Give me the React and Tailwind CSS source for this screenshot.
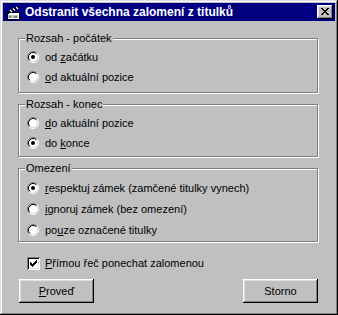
const font = "font-['Liberation_Sans',Arial,sans-serif]";

function Radio({ checked }) {
  return (
    <svg width="12" height="12" viewBox="0 0 12 12" className="shrink-0">
      <circle cx="6" cy="6" r="4.5" fill="#fff" />
      <path d="M2.11 9.89 A5.5 5.5 0 0 1 9.89 2.11" stroke="#808080" fill="none" />
      <path d="M9.89 2.11 A5.5 5.5 0 0 1 2.11 9.89" stroke="#fff" fill="none" />
      <path d="M2.82 9.18 A4.5 4.5 0 0 1 9.18 2.82" stroke="#000" fill="none" />
      <path d="M9.18 2.82 A4.5 4.5 0 0 1 2.82 9.18" stroke="#dfdfdf" fill="none" />
      {checked && <circle cx="6" cy="6" r="2" fill="#000" />}
    </svg>
  );
}

function Check() {
  const rows = ["......X", ".....XX", "X...XXX", "XX.XXX.", "XXXXX..", ".XXX...", "..X...."];
  return (
    <div className="w-[13px] h-[13px] shrink-0 bg-white shadow-[inset_1px_1px_#808080,inset_-1px_-1px_#fff,inset_2px_2px_#000,inset_-2px_-2px_#dfdfdf] flex items-center justify-center">
      <svg width="7" height="7" viewBox="0 0 7 7" shapeRendering="crispEdges">
        {rows.map((r, y) =>
          r.split("").map((c, x) => (c === "X" ? <rect key={x + "-" + y} x={x} y={y} width="1" height="1" fill="#000" /> : null))
        )}
      </svg>
    </div>
  );
}

function CloseGlyph() {
  const rows = ["XX....XX", ".XX..XX.", "..XXXX..", "...XX...", "..XXXX..", ".XX..XX.", "XX....XX"];
  return (
    <svg width="8" height="7" viewBox="0 0 8 7" shapeRendering="crispEdges">
      {rows.map((r, y) =>
        r.split("").map((c, x) => (c === "X" ? <rect key={x + "-" + y} x={x} y={y} width="1" height="1" fill="#000" /> : null))
      )}
    </svg>
  );
}

function ClapIcon() {
  return (
    <svg width="16" height="16" viewBox="0 0 16 16" shapeRendering="crispEdges">
      <rect x="2" y="8" width="12" height="7" fill="#fff" stroke="#000" strokeWidth="1" />
      <rect x="3" y="11" width="10" height="3" fill="#c0c0c0" />
      <path d="M2 8 L13 2 L14 4 L3 10 Z" fill="#000" />
      <path d="M5 6 L7 8 M8 4.5 L10 6.5 M11 3 L13 5" stroke="#fff" strokeWidth="1.2" shapeRendering="auto" />
      <rect x="4" y="12" width="2" height="2" fill="#808080" />
      <rect x="9" y="12" width="3" height="2" fill="#808080" />
    </svg>
  );
}

function Group({ label, className, children }) {
  return (
    <div className={"relative border border-[#808080] shadow-[1px_1px_0_#fff,inset_1px_1px_0_#fff] pl-[8px] " + className}>
      <span className="absolute left-[6px] top-[-8px] bg-[#c0c0c0] pl-[1px] pr-[1px] leading-[14px]">{label}</span>
      {children}
    </div>
  );
}

function Option({ checked, tall, children }) {
  return (
    <div className={(tall ? "h-[21px]" : "h-5") + " flex items-center gap-[6px]"}>
      <Radio checked={checked} />
      <span className="leading-[14px]">{children}</span>
    </div>
  );
}

function Button({ children }) {
  return (
    <button className="w-[75px] h-[24px] bg-[#c0c0c0] shadow-[inset_-1px_-1px_#000,inset_1px_1px_#fff,inset_-2px_-2px_#808080,inset_2px_2px_#dfdfdf] flex items-center justify-center leading-[14px]">
      {children}
    </button>
  );
}

export default function App() {
  return (
    <div className={"w-[338px] h-[315px] bg-[#c0c0c0] p-[3px] text-[11px] text-black shadow-[inset_-1px_-1px_#000,inset_1px_1px_#dfdfdf,inset_-2px_-2px_#808080,inset_2px_2px_#fff] flex flex-col " + font}>
      <div className="h-[18px] bg-[#000080] flex items-center pl-[2px] pr-[2px]">
        <ClapIcon />
        <span className="ml-[4px] text-white font-bold text-[12px] leading-[16px] flex-1">Odstranit všechna zalomení z titulků</span>
        <div className="w-[16px] h-[14px] bg-[#c0c0c0] shadow-[inset_-1px_-1px_#000,inset_1px_1px_#fff,inset_-2px_-2px_#808080,inset_2px_2px_#dfdfdf] flex items-center justify-center pb-[1px]">
          <CloseGlyph />
        </div>
      </div>

      <div className="flex flex-col pl-[15px] pr-[17px]">
        <Group label="Rozsah - počátek" className="mt-[17px] pt-[8px] pb-[5px]">
          <Option checked>
            od <u>z</u>ačátku
          </Option>
          <Option>
            <u>o</u>d aktuální pozice
          </Option>
        </Group>

        <Group label="Rozsah - konec" className="mt-[11px] pt-[8px] pb-[3px]">
          <Option>
            <u>d</u>o aktuální pozice
          </Option>
          <Option checked>
            do <u>k</u>once
          </Option>
        </Group>

        <Group label="Omezení" className="mt-[11px] pt-[8px] pb-[1px]">
          <Option checked tall>
            <u>r</u>espektuj zámek (zamčené titulky vynech)
          </Option>
          <Option tall>
            <u>i</u>gnoruj zámek (bez omezení)
          </Option>
          <Option tall>
            po<u>u</u>ze označené titulky
          </Option>
        </Group>

        <div className="mt-[14px] ml-[9px] flex items-center gap-[5px]">
          <Check />
          <span className="leading-[14px]">
            <u>P</u>římou řeč ponechat zalomenou
          </span>
        </div>

        <div className="mt-[9px] flex justify-between pl-[1px]">
          <Button>
            <u>P</u>roveď
          </Button>
          <Button>Storno</Button>
        </div>
      </div>
    </div>
  );
}
